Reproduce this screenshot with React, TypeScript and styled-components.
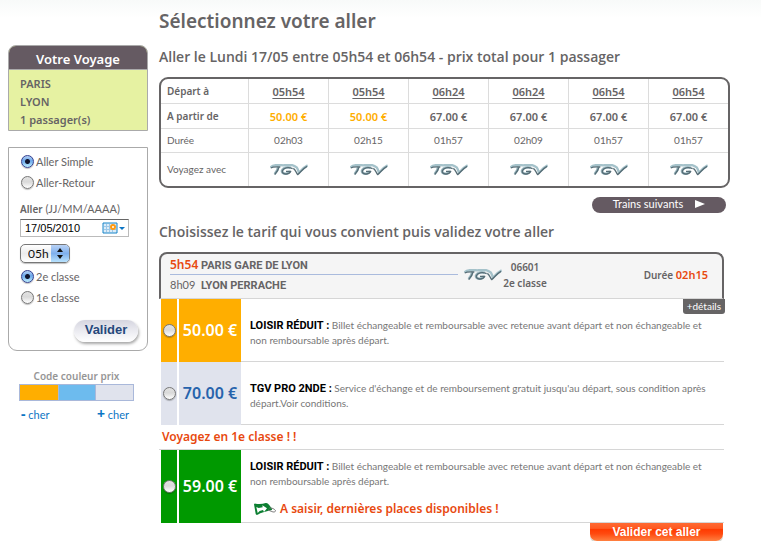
import React, { useState } from "react";
import styled, { createGlobalStyle, css } from "styled-components";

const regular = `Lato, "Open Sans", sans-serif`;
const strong = `"Noto Sans", "Open Sans", sans-serif`;
const caps = `Roboto, "Noto Sans", sans-serif`;
const plain = `"Liberation Sans", Arial, sans-serif`;

const grey = "#666465";
const orange = "#e8490f";
const amber = "#ffae00";
const line = "#d6d6d6";
const plum = "#655a62";

const GlobalStyle = createGlobalStyle`
  *, *::before, *::after { box-sizing: border-box; }
  body {
    margin: 0;
    background: linear-gradient(#f8faf9, #fff 18px) no-repeat #fff;
    color: ${grey};
    font: 10px/15px ${regular};
  }
  h1, h2, h3, p { margin: 0; }
  button, input, select { font: inherit; color: inherit; margin: 0; }
`;

const Page = styled.div`
  display: grid;
  grid-template-columns: 140px minmax(0, 1fr);
  column-gap: 11px;
  align-items: start;
  padding: 0 31px 0 8px;
`;

const Sidebar = styled.aside`
  display: flex;
  flex-direction: column;
  padding-top: 45px;
`;

const Trip = styled.section`
  border: 1px solid #aaa;
  border-radius: 8px 8px 0 0;
  background: #e6f2a2;
  overflow: hidden;
`;

const TripTitle = styled.h2`
  background: ${plum};
  border-bottom: 1px solid #aaa;
  color: #fff;
  font: 600 13px/27px ${strong};
  height: 24px;
  text-align: center;
`;

const TripLines = styled.div`
  padding: 5px 11px 1px;
  font: 600 11px/18px ${strong};
`;

const SearchForm = styled.form`
  display: flex;
  flex-direction: column;
  align-items: flex-start;
  margin-top: 16px;
  padding: 3px 10px 8px 11px;
  border: 1px solid #aaa;
  border-radius: 0 0 9px 9px;
`;

const Choice = styled.label`
  display: flex;
  align-items: center;
  gap: 2px;
  height: 21px;
  padding-left: 1px;
  font: 11px/21px ${regular};
`;

const Radio = styled.input.attrs({ type: "radio" })`
  appearance: none;
  flex: none;
  width: 13px;
  height: 13px;
  border: 1px solid #777;
  border-radius: 50%;
  background: linear-gradient(#e2e2e2, #d9d9d9 45%, #fff);
  box-shadow: 0 1px 1px rgba(0, 0, 0, 0.25);
  &:checked {
    border-color: #35408f;
    background: radial-gradient(circle, #10152e 0 2px, transparent 3px),
      linear-gradient(#b4d0f4, #6aa6ea 45%, #bff0ff);
  }
`;

const FieldLabel = styled.label`
  margin-top: 8px;
  font: 11px/16px ${regular};
  b { font: 600 10px/16px ${strong}; }
`;

const DateField = styled.div`
  display: flex;
  align-items: center;
  width: 109px;
  height: 18px;
  margin-top: 2px;
  border: 1px solid #bbb;
  border-top-color: #666;
  background: #fff;
`;

const DateInput = styled.input`
  flex: 1;
  min-width: 0;
  padding: 0 0 0 4px;
  border: 0;
  outline: 0;
  background: none;
  color: #000;
  font: 11px/16px ${plain};
`;

const CalendarButton = styled.button`
  display: flex;
  padding: 0;
  margin-right: 3px;
  border: 0;
  background: none;
`;

const HourField = styled.div`
  display: grid;
  width: 50px;
  height: 19px;
  margin-top: 7px;
  margin-bottom: 3px;
  border: 1px solid #777;
  border-radius: 5px;
  background: linear-gradient(#fff, #ececec 50%, #fff);
  box-shadow: 0 1px 1px rgba(0, 0, 0, 0.25);
  overflow: hidden;
  > * { grid-area: 1 / 1; }
`;

const HourSelect = styled.select`
  appearance: none;
  width: 100%;
  padding: 0 0 0 7px;
  border: 0;
  outline: 0;
  background: none;
  color: #111;
  font: 12px/17px ${regular};
`;

const HourArrows = styled.svg`
  justify-self: end;
  width: 18px;
  height: 17px;
  pointer-events: none;
  background: linear-gradient(#b9d2f5, #7fb0ee 50%, #b8e2fd);
`;

const SearchButton = styled.button`
  align-self: flex-end;
  width: 64px;
  height: 22px;
  margin-top: 12px;
  margin-right: -1px;
  padding: 0 0 3px;
  border: 0;
  border-radius: 11px;
  background: linear-gradient(#d5d5df, #e9e9ef 45%, #fff);
  box-shadow: 1px 2px 3px rgba(0, 0, 0, 0.35);
  color: #25487c;
  font: bold 13px/18px ${plain};
`;

const Legend = styled.section`
  display: flex;
  flex-direction: column;
  margin: 17px 14px 0 11px;
`;

const LegendTitle = styled.h3`
  color: #969696;
  font: 600 10px/16px ${strong};
  text-align: center;
`;

const LegendBar = styled.div`
  display: grid;
  grid-template-columns: repeat(3, 1fr);
  height: 17px;
  border: 1px solid #a9b8da;
`;

const LegendColor = styled.span<{ $color: string }>`
  background: ${(p) => p.$color};
  & + & { border-left: 1px solid #a9b8da; }
`;

const LegendEnds = styled.div`
  display: flex;
  justify-content: space-between;
  padding: 3px 5px 0 2px;
  color: #0b75c4;
  font: 11px/20px ${regular};
  b { font: 700 14px/20px ${strong}; }
`;

const Main = styled.main`
  display: flex;
  flex-direction: column;
  padding-top: 8px;
`;

const Title = styled.h1`
  font: 600 19px/26px ${strong};
`;

const Subtitle = styled.h2<{ $gap: number }>`
  margin-top: ${(p) => p.$gap}px;
  font: 600 14px/20px "Open Sans", sans-serif;
`;

const TrainsFrame = styled.div`
  margin-top: 10px;
  border: 2px solid ${grey};
  border-radius: 9px;
  overflow: hidden;
`;

const TrainsTable = styled.table`
  width: 100%;
  table-layout: fixed;
  border-collapse: separate;
  border-spacing: 0;
  td, th {
    height: 25px;
    padding: 0;
    border: solid #dcdcdc;
    border-width: 0 0 1px 1px;
    text-align: center;
    vertical-align: middle;
    font: 10px/15px ${regular};
  }
  th:first-child {
    width: 87px;
    padding-left: 6px;
    border-left: 0;
    text-align: left;
  }
  tr:nth-child(3) > * { height: 24px; }
  tr:last-child > * { height: 33px; border-bottom: 0; }
  svg { display: block; margin: 0 auto; }
`;

const StrongCell = styled.td<{ $low?: boolean }>`
  &&& {
    font: 600 11px/15px ${strong};
    color: ${(p) => (p.$low ? amber : grey)};
  }
`;

const StrongHead = styled.th`
  &&& { font: 600 10px/15px ${strong}; }
`;

const TimeLink = styled.a`
  color: inherit;
  font-size: 11px;
  text-underline-offset: 2px;
`;

const NextButton = styled.button`
  display: flex;
  align-items: center;
  justify-content: center;
  align-self: flex-end;
  gap: 12px;
  width: 134px;
  height: 16px;
  margin: 9px 4px 0 0;
  padding: 0 0 2px;
  border: 0;
  border-radius: 8px;
  background: ${plum};
  color: #fff;
  font: 11px/14px ${regular};
`;

const Offers = styled.section`
  display: flex;
  flex-direction: column;
  margin: 10px 6px 0 0;
`;

const Journey = styled.header`
  display: grid;
  grid-template-columns: minmax(0, 1fr) 38px 46px 160px;
  align-items: center;
  height: 47px;
  padding: 0 14px 3px 9px;
  border: 2px solid ${grey};
  border-bottom: 1px solid ${line};
  border-radius: 8px 8px 0 0;
  background: #f5f5f5;
`;

const Stops = styled.div`
  margin-right: 6px;
`;

const Stop = styled.p<{ $first?: boolean }>`
  display: grid;
  grid-template-columns: 31px 1fr;
  align-items: baseline;
  font: 700 11px/20px ${caps};
  time { font: 11px/19px ${regular}; }
  ${(p) =>
    p.$first &&
    css`
      padding-top: 2px;
      border-bottom: 1px solid #aabbdd;
      line-height: 17px;
      time { color: ${orange}; font: 600 12px/17px ${strong}; }
    `}
`;

const TrainInfo = styled.p`
  font: 600 10px/16px ${strong};
  text-align: center;
  white-space: nowrap;
`;

const Duration = styled.p`
  font: 600 10px/16px ${strong};
  text-align: right;
  b { color: ${orange}; font-size: 11px; font-weight: 600; }
`;

const Offer = styled.article`
  display: grid;
  grid-template-columns: 16px 62px minmax(0, 1fr);
  column-gap: 2px;
  padding-left: 2px;
`;

const tones = {
  amber: { back: amber, text: "#fff" },
  pale: { back: "#e0e3ed", text: "#2763ac" },
  green: { back: "#009900", text: "#fff" },
};

const Pick = styled.label<{ $tone: keyof typeof tones }>`
  display: flex;
  align-items: center;
  justify-content: center;
  padding-bottom: 1px;
  background: ${(p) => tones[p.$tone].back};
`;

const Price = styled(Pick)`
  color: ${(p) => tones[p.$tone].text};
  font: 600 16px/20px ${strong};
  white-space: nowrap;
`;

const Terms = styled.div<{ $tall?: boolean }>`
  display: flex;
  flex-direction: column;
  justify-content: center;
  min-height: ${(p) => (p.$tall ? 73 : 63)}px;
  margin-left: -2px;
  padding: 6px 12px 0 9px;
  border-bottom: 1px solid ${line};
  color: #777;
  b { color: #000; font: 700 11px/15px ${caps}; }
`;

const FirstClass = styled.h3`
  padding-left: 3px;
  border-bottom: 1px solid ${line};
  color: ${orange};
  font: 600 12px/24px ${strong};
`;

const LastSeats = styled.p`
  display: flex;
  align-items: center;
  gap: 3px;
  margin-top: 10px;
  padding-left: 3px;
  color: ${orange};
  font: 600 12px/20px ${strong};
`;

const OfferStack = styled.div`
  display: grid;
  > * { grid-area: 1 / 1; }
`;

const Details = styled.button`
  justify-self: end;
  align-self: start;
  z-index: 1;
  height: 15px;
  margin-right: -1px;
  padding: 0 4px;
  border: 0;
  border-radius: 0 0 3px 3px;
  background: ${grey};
  color: #fff;
  font: 10px/15px ${regular};
`;

const ConfirmButton = styled.button`
  align-self: flex-end;
  width: 133px;
  height: 18px;
  margin-right: 1px;
  padding: 0;
  border: 0;
  border-radius: 0 0 7px 7px;
  background: linear-gradient(#ff6a33, #ff5a22 30%, #ff3a00 35%, #ff4a10 60%, #ff8040);
  box-shadow: 0 2px 0 #d8d8d0;
  color: #fff;
  font: bold 12px/18px ${plain};
`;

function TgvLogo() {
  return (
    <svg width="38" height="12" viewBox="0 0 114 36" role="img" aria-label="TGV">
      <g fill="none" strokeLinejoin="round">
        <path d="M2 10C8 3 24 2 40 4C54 1 70 2 80 10C84 14 84 20 87 26C94 19 101 10 113 4" stroke="#a5c2ca" strokeWidth="7" />
        <path d="M25 8C24 16 19 24 14 30M62 11C44 6 32 18 38 26C45 32 58 29 60 20" stroke="#9dbac2" strokeWidth="8" />
        <path d="M2 12C8 8 18 8 31 9M27 9C25 18 20 25 14 32M68 14C54 8 40 12 37 20C34 32 56 34 62 22H48M70 13C77 17 78 26 83 32C92 25 98 14 111 7" stroke="#566d76" strokeWidth="4" />
      </g>
    </svg>
  );
}

function CalendarIcon() {
  return (
    <svg width="23" height="12" viewBox="0 0 23 12" aria-hidden="true">
      <path d="M1 1H15V11H1Z" fill="#dcecf8" stroke="#1684c8" />
      <path d="M4.500 2V10M7.500 2V10M10.500 2V10M2 4.500H14M2 7.500H14" stroke="#9cc8e8" />
      <circle cx="11" cy="5" r="2" fill="#fff" stroke="#ff9a12" strokeWidth="2" />
      <path d="M17 5H23L20 8Z" fill="#0b75c4" />
    </svg>
  );
}

function TagIcon() {
  return (
    <svg width="24" height="14" viewBox="0 0 72 42" aria-hidden="true">
      <path d="M3 7Q4 4 8 5Q26 7 38 3Q44 2 48 8L57 20Q58 24 54 25Q28 30 14 38Q9 40 8 35Z" fill="#0c7f32" />
      <path d="M10 15L17 18L29 16L28 10L42 19L33 30L30 24L20 27L14 33Z" fill="#fff" />
      <path d="M49 18C60 17 70 25 67 28C62 33 54 27 45 24" fill="none" stroke="#777" strokeWidth="3" />
    </svg>
  );
}

const trains = [
  { time: "05h54", price: "50.00 €", low: true, length: "02h03" },
  { time: "05h54", price: "50.00 €", low: true, length: "02h15" },
  { time: "06h24", price: "67.00 €", low: false, length: "01h57" },
  { time: "06h24", price: "67.00 €", low: false, length: "02h09" },
  { time: "06h54", price: "67.00 €", low: false, length: "01h57" },
  { time: "06h54", price: "67.00 €", low: false, length: "01h57" },
];

interface OfferProps {
  id: string;
  tone: keyof typeof tones;
  price: string;
  name: string;
  terms: string;
  picked: string;
  onPick: (id: string) => void;
  lastSeats?: boolean;
}

function OfferRow({ id, tone, price, name, terms, picked, onPick, lastSeats }: OfferProps) {
  return (
    <Offer>
      <Pick $tone={tone}>
        <Radio name="offer" id={id} aria-label={`${name} ${price}`} checked={picked === id} onChange={() => onPick(id)} />
      </Pick>
      <Price as="label" htmlFor={id} $tone={tone}>{price}</Price>
      <Terms $tall={lastSeats}>
        <p><b>{`${name} :`}</b> {terms}</p>
        {lastSeats && <LastSeats><TagIcon />A saisir, dernières places disponibles !</LastSeats>}
      </Terms>
    </Offer>
  );
}

export default function App() {
  const [way, setWay] = useState("simple");
  const [travelClass, setTravelClass] = useState("2");
  const [date, setDate] = useState("17/05/2010");
  const [picked, setPicked] = useState("");
  const loisir =
    "Billet échangeable et remboursable avec retenue avant départ et non échangeable et non remboursable après départ.";

  return (
    <>
      <GlobalStyle />
      <Page>
        <Sidebar>
          <Trip>
            <TripTitle>Votre Voyage</TripTitle>
            <TripLines>
              <p>PARIS</p>
              <p>LYON</p>
              <p>1 passager(s)</p>
            </TripLines>
          </Trip>
          <SearchForm onSubmit={(e) => e.preventDefault()}>
            <Choice><Radio name="way" checked={way === "simple"} onChange={() => setWay("simple")} />Aller Simple</Choice>
            <Choice><Radio name="way" checked={way === "return"} onChange={() => setWay("return")} />Aller-Retour</Choice>
            <FieldLabel htmlFor="date"><b>Aller</b> (JJ/MM/AAAA)</FieldLabel>
            <DateField>
              <DateInput id="date" value={date} onChange={(e) => setDate(e.target.value)} />
              <CalendarButton type="button" aria-label="Calendrier"><CalendarIcon /></CalendarButton>
            </DateField>
            <HourField>
              <HourSelect aria-label="Heure" defaultValue="05h">
                <option>05h</option>
                <option>06h</option>
                <option>07h</option>
              </HourSelect>
              <HourArrows viewBox="0 0 18 17" aria-hidden="true">
                <path d="M9 3L12 7H6ZM9 14L12 10H6Z" fill="#111" />
              </HourArrows>
            </HourField>
            <Choice><Radio name="class" checked={travelClass === "2"} onChange={() => setTravelClass("2")} />2e classe</Choice>
            <Choice><Radio name="class" checked={travelClass === "1"} onChange={() => setTravelClass("1")} />1e classe</Choice>
            <SearchButton type="submit">Valider</SearchButton>
          </SearchForm>
          <Legend>
            <LegendTitle>Code couleur prix</LegendTitle>
            <LegendBar>
              <LegendColor $color={amber} />
              <LegendColor $color="#6dbbee" />
              <LegendColor $color="#e0e3ed" />
            </LegendBar>
            <LegendEnds>
              <span><b>-</b> cher</span>
              <span><b>+</b> cher</span>
            </LegendEnds>
          </Legend>
        </Sidebar>

        <Main>
          <Title>Sélectionnez votre aller</Title>
          <Subtitle $gap={13}>Aller le Lundi 17/05 entre 05h54 et 06h54 - prix total pour 1 passager</Subtitle>
          <TrainsFrame>
            <TrainsTable>
              <tbody>
                <tr>
                  <StrongHead scope="row">Départ à</StrongHead>
                  {trains.map((t, i) => <StrongCell key={i}><TimeLink href="#offers">{t.time}</TimeLink></StrongCell>)}
                </tr>
                <tr>
                  <StrongHead scope="row">A partir de</StrongHead>
                  {trains.map((t, i) => <StrongCell key={i} $low={t.low}>{t.price}</StrongCell>)}
                </tr>
                <tr>
                  <th scope="row">Durée</th>
                  {trains.map((t, i) => <td key={i}>{t.length}</td>)}
                </tr>
                <tr>
                  <th scope="row">Voyagez avec</th>
                  {trains.map((_, i) => <td key={i}><TgvLogo /></td>)}
                </tr>
              </tbody>
            </TrainsTable>
          </TrainsFrame>
          <NextButton type="button">
            Trains suivants
            <svg width="10" height="8" viewBox="0 0 10 8" aria-hidden="true"><path d="M0 0L10 4L0 8Z" fill="#fff" /></svg>
          </NextButton>
          <Subtitle $gap={9}>Choisissez le tarif qui vous convient puis validez votre aller</Subtitle>
          <Offers id="offers">
            <Journey>
              <Stops>
                <Stop $first><time>5h54</time>PARIS GARE DE LYON</Stop>
                <Stop><time>8h09</time>LYON PERRACHE</Stop>
              </Stops>
              <TgvLogo />
              <TrainInfo>06601<br />2e classe</TrainInfo>
              <Duration>Durée <b>02h15</b></Duration>
            </Journey>
            <OfferStack>
              <OfferRow id="loisir2" tone="amber" price="50.00 €" name="LOISIR RÉDUIT" terms={loisir} picked={picked} onPick={setPicked} />
              <Details type="button">+détails</Details>
            </OfferStack>
            <OfferRow
              id="pro2"
              tone="pale"
              price="70.00 €"
              name="TGV PRO 2NDE"
              terms="Service d'échange et de remboursement gratuit jusqu'au départ, sous condition après départ.Voir conditions."
              picked={picked}
              onPick={setPicked}
            />
            <FirstClass>Voyagez en 1e classe ! !</FirstClass>
            <OfferRow id="loisir1" tone="green" price="59.00 €" name="LOISIR RÉDUIT" terms={loisir} picked={picked} onPick={setPicked} lastSeats />
            <ConfirmButton type="button">Valider cet aller</ConfirmButton>
          </Offers>
        </Main>
      </Page>
    </>
  );
}
